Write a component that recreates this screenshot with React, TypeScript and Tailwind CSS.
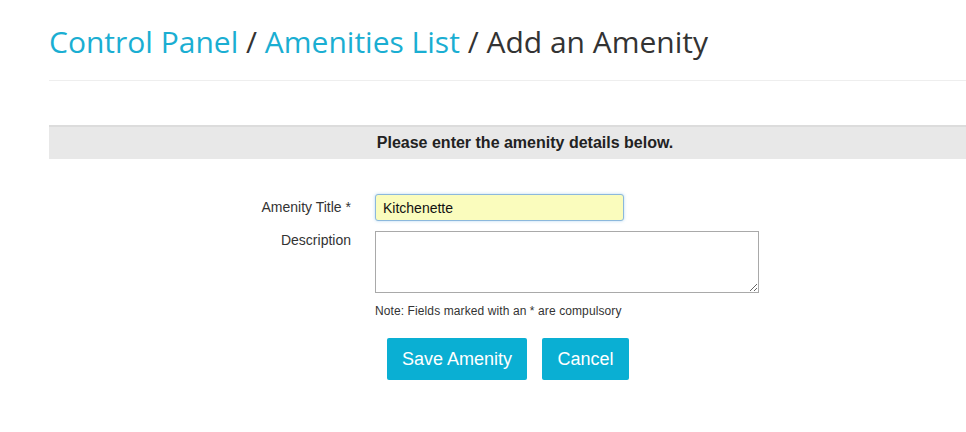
export default function App() {
  return (
    <div className="h-[432px] w-[966px] overflow-hidden bg-white font-['Liberation_Sans',Arial,sans-serif] text-[#333]">
      <div className="ml-[49px] w-[952px]">
        <h1 className="pt-[22px] font-['Open_Sans',sans-serif] text-[30px] font-normal leading-[40px] text-[#333]">
          <a className="text-[#1aaed2]">Control Panel</a> / <a className="text-[#1aaed2]">Amenities List</a> / Add an Amenity
        </h1>
        <hr className="mt-[18px] border-t border-[#eeeeee]" />

        <div className="mt-[44px] border-t-2 border-[#dcdcdc] bg-[#e8e8e8] py-[7px] text-center text-[16px] font-bold leading-[18px] text-[#222]">
          Please enter the amenity details below.
        </div>

        <div className="mt-[35px] flex flex-col gap-[10px]">
          <div className="flex items-start">
            <label className="w-[302px] pt-[4px] text-right text-[14px] leading-[18px] text-[#333]">Amenity Title *</label>
            <input
              defaultValue="Kitchenette"
              className="ml-[24px] h-[27px] w-[249px] rounded-[3px] border border-[#8cb8dc] bg-[#fafcbd] px-[7px] text-[14px] text-[#111] shadow-[0_0_3px_rgba(102,175,233,0.5)] outline-none"
            />
          </div>
          <div className="flex items-start">
            <label className="w-[302px] text-right text-[14px] leading-[18px] text-[#333]">Description</label>
            <textarea className="ml-[24px] h-[62px] w-[384px] border border-[#a9a9a9] bg-white outline-none" />
          </div>
        </div>

        <p className="ml-[326px] mt-[10px] text-[12px] leading-[16px] tracking-[0.1px] text-[#333]">
          Note: Fields marked with an * are compulsory
        </p>

        <div className="ml-[338px] mt-[19px] flex gap-[15px]">
          <button className="h-[42px] w-[140px] rounded-[2px] bg-[#0aafd3] text-[18px] text-white">Save Amenity</button>
          <button className="h-[42px] w-[87px] rounded-[2px] bg-[#0aafd3] text-[18px] text-white">Cancel</button>
        </div>
      </div>
    </div>
  );
}
